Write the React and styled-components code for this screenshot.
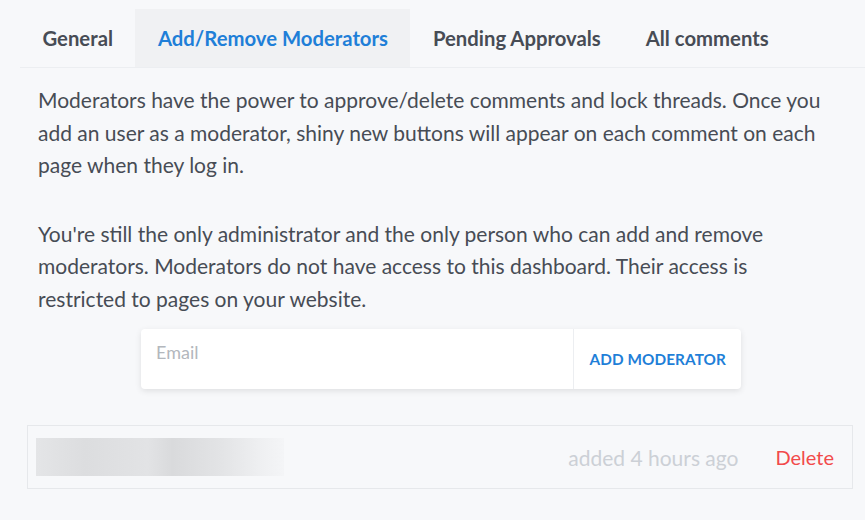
import React from "react";
import styled, { createGlobalStyle } from "styled-components";

const Global = createGlobalStyle`
  html, body { margin: 0; padding: 0; background: #f7f8fa; }
  body { font-family: Lato, "Liberation Sans", sans-serif; }
`;

const Page = styled.div`
  width: 865px;
  height: 520px;
  padding: 9px 0 0 20px;
  box-sizing: border-box;
  overflow: hidden;
`;

const TabBar = styled.nav`
  display: flex;
  border-bottom: 1px solid #eceef1;
  height: 58px;
`;

const Tab = styled.div`
  display: flex;
  align-items: center;
  padding: 0 22.5px;
  font-size: 20.3px;
  font-weight: 700;
  color: ${(p) => (p.$active ? "#1f7fd8" : "#474c55")};
  background: ${(p) => (p.$active ? "#f0f1f3" : "transparent")};
  white-space: nowrap;
`;

const Content = styled.div`
  padding: 16px 20px 0 18px;
`;

const Paragraph = styled.p`
  margin: 0 0 36px;
  font-size: 21px;
  line-height: 32.5px;
  color: #474c55;
  max-width: 785px;
`;

const AddForm = styled.div`
  display: flex;
  width: 600px;
  height: 60px;
  margin: -22px auto 0 103px;
  background: #fff;
  border-radius: 4px;
  box-shadow: 0 2px 6px rgba(0, 0, 0, 0.1);
`;

const EmailInput = styled.input`
  flex: 1;
  border: none;
  outline: none;
  background: transparent;
  padding: 0 15px 14px;
  font-family: inherit;
  font-size: 18px;
  color: #474c55;
  &::placeholder { color: #b3b7bd; }
`;

const AddButton = styled.button`
  border: none;
  border-left: 1px solid #eceef1;
  background: transparent;
  padding: 0 15px;
  font-family: inherit;
  font-size: 15.3px;
  font-weight: 700;
  color: #1f7fd8;
  letter-spacing: 0.1px;
`;

const ModRow = styled.div`
  display: flex;
  align-items: center;
  margin: 36px 12px 0 7px;
  height: 64px;
  box-sizing: border-box;
  border: 1px solid #e6e8eb;
  padding: 0 18px 0 8px;
`;

const Blurred = styled.div`
  width: 248px;
  height: 38px;
  background: linear-gradient(90deg, #e4e5e7 0%, #dcdddf 20%, #e2e3e5 45%, #d9dadc 55%, #e3e4e6 75%, #eeeff1 90%, #f4f5f7 100%);
  filter: blur(0.5px);
`;

const Added = styled.span`
  margin-left: auto;
  font-size: 21px;
  color: #ccd0d6;
`;

const Delete = styled.span`
  margin-left: 37px;
  font-size: 20px;
  color: #f24a4a;
`;

export default function App() {
  return (
    <>
      <Global />
      <Page>
        <TabBar>
          <Tab>General</Tab>
          <Tab $active>Add/Remove Moderators</Tab>
          <Tab>Pending Approvals</Tab>
          <Tab>All comments</Tab>
        </TabBar>
        <Content>
          <Paragraph>
            Moderators have the power to approve/delete comments and lock threads. Once you add an user as a moderator, shiny new buttons will appear on each comment on each page when they log in.
          </Paragraph>
          <Paragraph>
            You're still the only administrator and the only person who can add and remove moderators. Moderators do not have access to this dashboard. Their access is restricted to pages on your website.
          </Paragraph>
          <AddForm>
            <EmailInput placeholder="Email" />
            <AddButton>ADD MODERATOR</AddButton>
          </AddForm>
        </Content>
        <ModRow>
          <Blurred />
          <Added>added 4 hours ago</Added>
          <Delete>Delete</Delete>
        </ModRow>
      </Page>
    </>
  );
}
